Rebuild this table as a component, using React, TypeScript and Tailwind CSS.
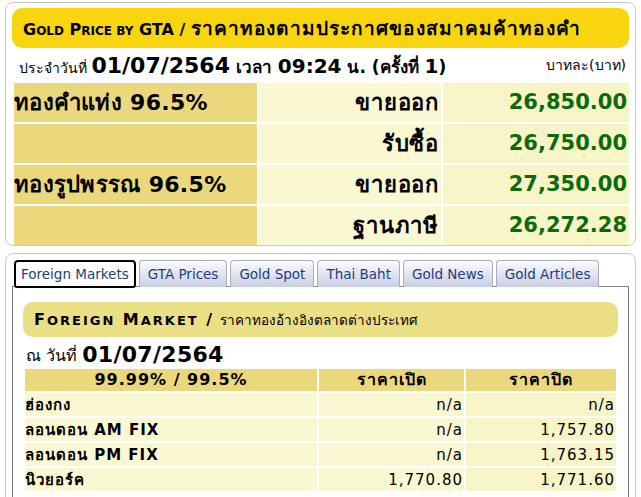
const font = { fontFamily: '"DejaVu Sans", "Noto Sans", sans-serif' };

const priceRows = [
  { name: "ทองคำแท่ง 96.5%", label: "ขายออก", value: "26,850.00" },
  { name: "", label: "รับซื้อ", value: "26,750.00" },
  { name: "ทองรูปพรรณ 96.5%", label: "ขายออก", value: "27,350.00" },
  { name: "", label: "ฐานภาษี", value: "26,272.28" },
];

const tabs = ["Foreign Markets", "GTA Prices", "Gold Spot", "Thai Baht", "Gold News", "Gold Articles"];

const markets = [
  { name: "ฮ่องกง", open: "n/a", close: "n/a" },
  { name: "ลอนดอน AM FIX", open: "n/a", close: "1,757.80" },
  { name: "ลอนดอน PM FIX", open: "n/a", close: "1,763.15" },
  { name: "นิวยอร์ค", open: "1,770.80", close: "1,771.60" },
];

export default function App() {
  return (
    <div className="w-[641px] h-[497px] overflow-hidden bg-white text-black" style={font}>
      <div className="mx-[5px] mt-[2px] rounded-[8px] border border-[#c8c8c8] px-[6px] pt-[5px] pb-0">
        <div className="flex h-[40px] items-center rounded-[10px] bg-[#f8d50f] pl-[11px] text-[16px] font-bold">
          <span>
            G<span className="text-[12px]">OLD</span> P<span className="text-[12px]">RICE BY</span> GTA /{" "}
            <span className="text-[19px] tracking-[1.1px]">ราคาทองตามประกาศของสมาคมค้าทองคำ</span>
          </span>
        </div>
        <div className="flex h-[35px] items-center justify-between pl-[7px] pr-[3px]">
          <div className="text-[14px]">
            ประจำวันที่{" "}
            <span className="text-[17px] font-bold">
              <span className="text-[22px]">01/07/2564</span> เวลา <span className="text-[20px]">09:24</span> น.
              (ครั้งที่ <span className="text-[20px]">1</span>)
            </span>
          </div>
          <div className="text-[14px]">บาทละ(บาท)</div>
        </div>
        <div className="ml-[2px] mr-[-1px] grid grid-cols-[243px_182px_186px] gap-[2px]">
          {priceRows.map((r, i) => (
            <div key={i} className="contents">
              <div className="flex h-[39px] items-center bg-[#ebd87d] text-[22px] font-bold tracking-[0.3px]">{r.name}</div>
              <div className="flex h-[39px] items-center justify-end bg-[#f9f8d3] pr-[2px] text-[22px] font-bold tracking-[0.8px]">{r.label}</div>
              <div className="flex h-[39px] items-center justify-end bg-[#f7f5c8] pr-[2px] text-[21px] font-bold text-[#0b6b0b]">{r.value}</div>
            </div>
          ))}
        </div>
      </div>

      <div className="mx-[5px] mt-[7px] h-[300px] rounded-[8px] border border-[#c8c8c8] px-[6px] pt-[6px]">
        <div className="flex gap-[3px] pl-[2px]">
          {tabs.map((t, i) => (
            <div
              key={t}
              className={
                i === 0
                  ? "relative z-10 flex h-[28px] items-center rounded-t-[4px] rounded-b-[3px] border-2 border-black bg-white px-[5px] text-[13.5px] text-[#1b3f7a]"
                  : "flex h-[27px] items-center rounded-t-[4px] border border-b-0 border-[#a9acbe] bg-gradient-to-b from-[#fbfbfd] to-[#c9cde2] px-[8px] text-[13.5px] text-[#1b3f7a]"
              }
            >
              {t}
            </div>
          ))}
        </div>
        <div className="mt-[-2px] h-[240px] border border-[#777] border-t-[#888] px-[10px] pt-[15px]">
          <div className="flex h-[35px] items-center rounded-[10px] bg-[#ebdf85] pl-[11px] text-[16px] font-bold">
            <span>
              <span className="tracking-[2px]">
                F<span className="text-[13px]">OREIGN</span> M<span className="text-[13px]">ARKET</span> /
              </span>{" "}
              <span className="text-[13.5px] font-normal">ราคาทองอ้างอิงตลาดต่างประเทศ</span>
            </span>
          </div>
          <div className="flex h-[32px] items-end px-[3px] pb-[1px] text-[16px]">
            ณ วันที่&nbsp;<span className="text-[22px] font-bold leading-[26px] tracking-[0.3px]">01/07/2564</span>
          </div>
          <div className="mx-[2px] grid grid-cols-[292px_145px_150px] gap-[2px] text-[15px]">
            <div className="flex h-[22px] items-center justify-center bg-[#ebd87d] text-[16px] font-bold tracking-[1px]">99.99% / 99.5%</div>
            <div className="flex h-[22px] items-center justify-center bg-[#ebd87d] text-[16px] font-bold tracking-[1px]">ราคาเปิด</div>
            <div className="flex h-[22px] items-center justify-center bg-[#ebd87d] text-[16px] font-bold tracking-[1px]">ราคาปิด</div>
            {markets.map((m) => (
              <div key={m.name} className="contents">
                <div className="flex h-[23px] items-center bg-[#f9f8d3] pt-[2px] font-bold tracking-[1px]">{m.name}</div>
                <div className="flex h-[23px] items-center justify-end bg-[#f9f8d3] pt-[2px] pr-[1px] tracking-[1px]">{m.open}</div>
                <div className="flex h-[23px] items-center justify-end bg-[#f7f5c8] pt-[2px] pr-[1px] tracking-[1px]">{m.close}</div>
              </div>
            ))}
          </div>
        </div>
      </div>
    </div>
  );
}
